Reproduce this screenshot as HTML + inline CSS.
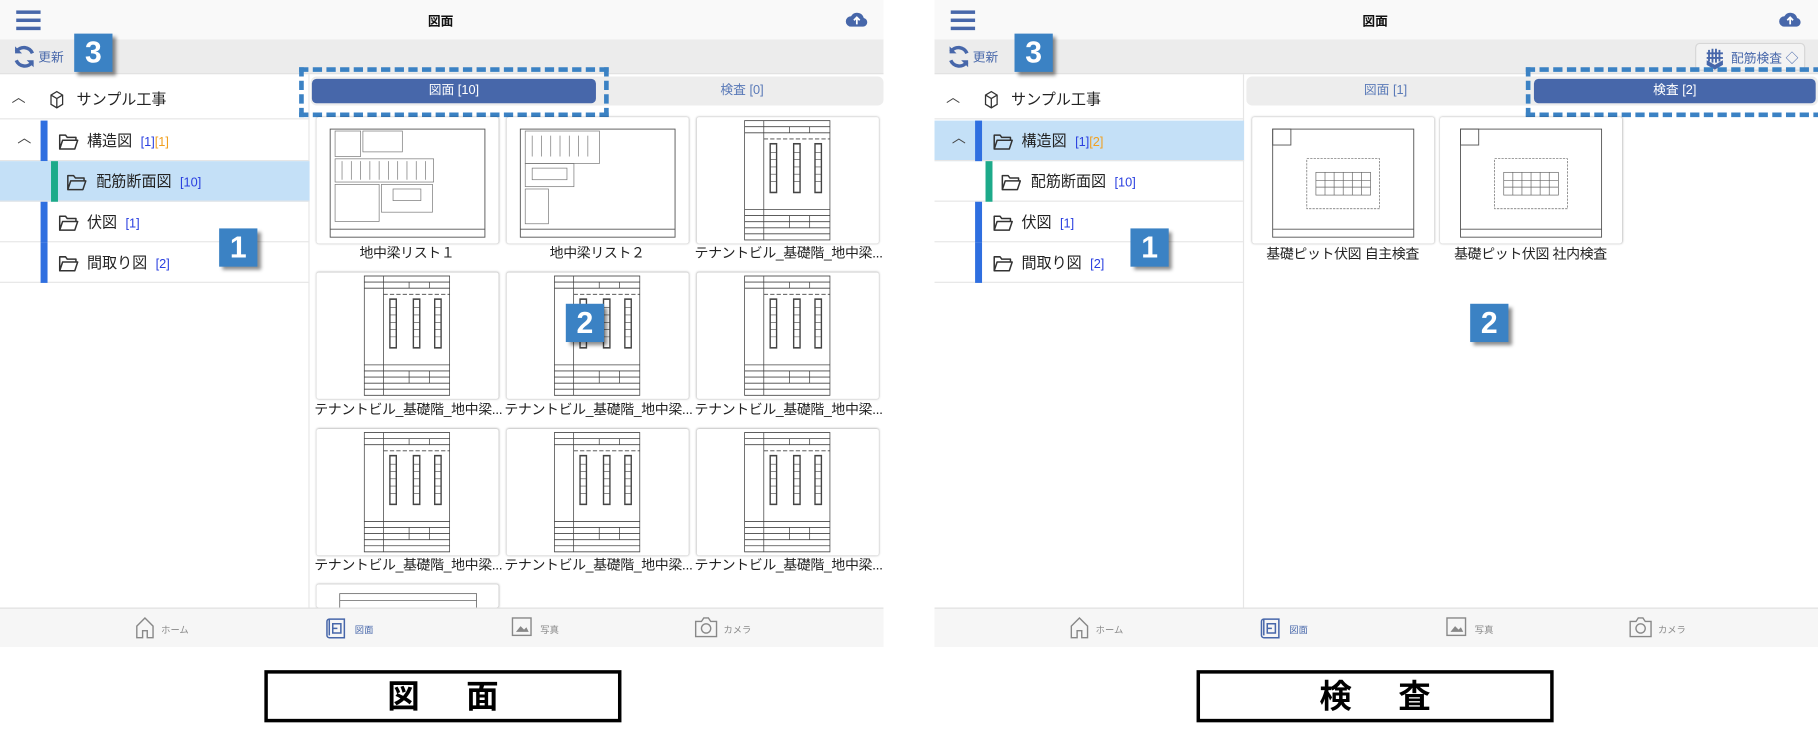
<!DOCTYPE html>
<html><head><meta charset="utf-8">
<style>
*{margin:0;padding:0;box-sizing:border-box}
body{width:1818px;height:734px;overflow:hidden;background:#fff;font-family:"Liberation Sans","Noto Sans CJK JP",sans-serif}
#root{position:absolute;left:0;top:0;width:1568px;height:633px;transform:scale(1.15944);transform-origin:0 0}
.a{position:absolute}
.hdr{background:#f9f9f9;height:34px}
.tb{background:#ececec;height:30px;top:34px;border-bottom:1px solid #e2e2e2}
.title{font-size:11px;font-weight:bold;color:#111;top:10px}
.badge{background:#3b82c4;color:#fff;font-weight:bold;font-size:26px;width:33px;height:33px;text-align:center;line-height:33px;box-shadow:3px 3px 3px rgba(0,0,0,.45);font-family:"Liberation Sans",sans-serif}
.row{height:35px;border-bottom:1px solid #e6e6e6;font-size:13px;color:#222;line-height:35px}
.bar{width:6px;height:35px;top:0}
.blue{color:#2a3fe0}.orng{color:#f0a020}
.card{width:157px;height:109px;background:#fff;box-shadow:0 0 2px rgba(0,0,0,.35);border-radius:2px}
.lbl{font-size:12px;color:#222;width:160px;text-align:center;white-space:nowrap;letter-spacing:-0.3px}
.nav{background:#f6f6f6;height:34px;top:524px;border-top:1px solid #e0e0e0}
.ni{font-size:8px;color:#888;top:13px}
.dash{border:4px dashed #3b82c4}
.tab{height:21px;top:68px;font-size:11px;text-align:center;line-height:21px;border-radius:4px}
.tabA{background:#4767aa;color:#fff}
.tabI{color:#5a7ab8}
.big{border:3px solid #000;height:45px;top:578px;width:308px;font-size:28px;font-weight:bold;text-align:center;line-height:39px;letter-spacing:40px;text-indent:40px;font-family:"Liberation Sans","Noto Sans CJK JP",sans-serif}
.fold{position:absolute;top:10px}
</style></head><body>
<svg width="0" height="0" style="position:absolute">
<defs>
<symbol id="fd" viewBox="0 0 18 16"><path d="M1.5 14.5V2.5h5l1.5 2h7.5v2.5M1.5 14.5L4 7h13l-2.5 7.5z" fill="none" stroke="#333" stroke-width="1.3" stroke-linejoin="round"/></symbol>
<symbol id="beam" viewBox="0 0 100 100">
<g fill="none" stroke="#444" stroke-width="0.7">
<rect x="10" y="1" width="80" height="98"/>
<line x1="10" y1="6" x2="90" y2="6"/><line x1="10" y1="11" x2="90" y2="11"/>
<line x1="28" y1="1" x2="28" y2="99"/>
<line x1="52" y1="6" x2="52" y2="11"/><line x1="71" y1="6" x2="71" y2="11"/>
<line x1="28" y1="16" x2="90" y2="16" stroke-dasharray="4 2"/>
<rect x="34" y="20" width="6" height="40" stroke-width="1.3"/><rect x="56" y="20" width="6" height="40" stroke-width="1.3"/><rect x="76" y="20" width="6" height="40" stroke-width="1.3"/>
<line x1="10" y1="74" x2="90" y2="74"/><line x1="10" y1="79" x2="90" y2="79"/><line x1="10" y1="84" x2="90" y2="84"/><line x1="10" y1="89" x2="90" y2="89"/><line x1="10" y1="94" x2="90" y2="94"/>
<line x1="52" y1="79" x2="52" y2="89"/><line x1="71" y1="79" x2="71" y2="89"/>
</g>
<g stroke="#444" stroke-width="0.5"><line x1="34" y1="27" x2="40" y2="27"/><line x1="34" y1="33" x2="40" y2="33"/><line x1="34" y1="39" x2="40" y2="39"/><line x1="34" y1="45" x2="40" y2="45"/><line x1="34" y1="51" x2="40" y2="51"/><line x1="56" y1="27" x2="62" y2="27"/><line x1="56" y1="33" x2="62" y2="33"/><line x1="56" y1="39" x2="62" y2="39"/><line x1="56" y1="45" x2="62" y2="45"/><line x1="56" y1="51" x2="62" y2="51"/><line x1="76" y1="27" x2="82" y2="27"/><line x1="76" y1="33" x2="82" y2="33"/><line x1="76" y1="39" x2="82" y2="39"/><line x1="76" y1="45" x2="82" y2="45"/><line x1="76" y1="51" x2="82" y2="51"/></g>
</symbol>
<symbol id="sheet" viewBox="0 0 160 110">
<g fill="none" stroke="#555" stroke-width="0.8">
<rect x="12" y="10" width="136" height="95"/><line x1="12" y1="98" x2="148" y2="98"/>
</g>
</symbol>
<symbol id="plan" viewBox="0 0 160 110">
<g fill="none" stroke="#555" stroke-width="0.8"><rect x="18" y="10" width="124" height="95"/><line x1="18" y1="98" x2="142" y2="98"/><rect x="18" y="10" width="16" height="14"/></g>
<g fill="none" stroke="#666" stroke-width="0.6"><rect x="48" y="36" width="64" height="44" stroke-dasharray="2 1"/><rect x="56" y="48" width="48" height="20"/><line x1="64" y1="48" x2="64" y2="68"/><line x1="72" y1="48" x2="72" y2="68"/><line x1="80" y1="48" x2="80" y2="68"/><line x1="88" y1="48" x2="88" y2="68"/><line x1="96" y1="48" x2="96" y2="68"/><line x1="56" y1="55" x2="104" y2="55"/><line x1="56" y1="61" x2="104" y2="61"/></g>
</symbol>
</defs></svg>
<div id="root">

<div class="a hdr" style="left:0;width:762px;top:0"></div>
<div class="a hdr" style="left:806px;width:762px;top:0"></div>
<div class="a tb" style="left:0;width:762px"></div>
<div class="a tb" style="left:806px;width:762px"></div>

<!-- LEFT PANEL -->
<div class="a" style="left:14px;top:9px;width:21px"><div style="height:3px;background:#4767aa;margin-bottom:4px"></div><div style="height:3px;background:#4767aa;margin-bottom:4px"></div><div style="height:3px;background:#4767aa"></div></div>
<div class="a title" style="left:369px">図面</div>
<svg class="a" style="left:729px;top:8px" width="20" height="16" viewBox="0 0 20 16"><path d="M5 15a4.5 4.5 0 0 1 0-9 6 6 0 0 1 11 1.5 3.8 3.8 0 0 1-.5 7.5z" fill="#4767aa"/><path d="M10 13V7M7.5 9.5L10 7l2.5 2.5" stroke="#fff" stroke-width="1.5" fill="none"/></svg>
<svg class="a" style="left:10px;top:38px" width="22" height="22" viewBox="0 0 22 22"><path d="M18 8A8 8 0 0 0 4 6.5M4 14a8 8 0 0 0 14 1.5" stroke="#4767aa" stroke-width="3" fill="none"/><path d="M3 2v6h6z" fill="#4767aa"/><path d="M19 20v-6h-6z" fill="#4767aa"/></svg>
<div class="a" style="left:33px;top:41px;font-size:11px;color:#4767aa">更新</div>
<div class="a badge" style="left:64px;top:29px">3</div>

<div class="a" style="left:0;top:64px;width:267px;height:460px;border-right:1px solid #e6e6e6"></div>
<div class="a row" style="left:0;top:68px;width:267px">
  <span class="a" style="left:10px;top:-1px;font-size:12px;color:#444">︿</span>
  <svg class="a" style="left:42px;top:10px" width="14" height="16" viewBox="0 0 14 16"><path d="M2 4l5-3 5 3v8l-5 3-5-3z M2 4l5 3 5-3 M7 7v8" stroke="#333" fill="none" stroke-width="1.1"/></svg>
  <span class="a" style="left:66px">サンプル工事</span></div>
<div class="a row" style="left:0;top:104px;width:267px"><div class="a bar" style="left:35px;background:#2f6fe0"></div><span class="a" style="left:15px;top:-2px;font-size:12px;color:#444">︿</span><svg class="fold" style="left:50px" width="18" height="16"><use href="#fd"/></svg><span class="a" style="left:75px">構造図 &nbsp;<span class="blue" style="font-size:11px">[1]</span><span class="orng" style="font-size:11px">[1]</span></span></div>
<div class="a row" style="left:0;top:139px;width:267px;background:#c4e0f7"><div class="a bar" style="left:44px;background:#1daa8a"></div><svg class="fold" style="left:57px" width="18" height="16"><use href="#fd"/></svg><span class="a" style="left:83px">配筋断面図 &nbsp;<span class="blue" style="font-size:11px">[10]</span></span></div>
<div class="a row" style="left:0;top:174px;width:267px"><div class="a bar" style="left:35px;background:#2f6fe0"></div><svg class="fold" style="left:50px" width="18" height="16"><use href="#fd"/></svg><span class="a" style="left:75px">伏図 &nbsp;<span class="blue" style="font-size:11px">[1]</span></span></div>
<div class="a row" style="left:0;top:209px;width:267px"><div class="a bar" style="left:35px;background:#2f6fe0"></div><svg class="fold" style="left:50px" width="18" height="16"><use href="#fd"/></svg><span class="a" style="left:75px">間取り図 &nbsp;<span class="blue" style="font-size:11px">[2]</span></span></div>

<div class="a" style="left:268px;top:66px;width:494px;height:25px;background:#ededed;border-radius:5px"></div>
<div class="a tab tabA" style="left:269px;width:245px">図面 [10]</div>
<div class="a tab tabI" style="left:520px;width:240px">検査 [0]</div>
<div class="a dash" style="left:258px;top:58px;width:267px;height:43px"></div>

<div class="a card" style="left:273px;top:101px"><svg width="157" height="109"><use href="#sheet"/><g stroke="#777" stroke-width=".6" fill="none"><rect x="16" y="12" width="22" height="22"/><rect x="40" y="12" width="34" height="18"/><rect x="16" y="36" width="85" height="20"/><line x1="22" y1="38" x2="22" y2="54"/><line x1="30" y1="38" x2="30" y2="54"/><line x1="38" y1="38" x2="38" y2="54"/><line x1="46" y1="38" x2="46" y2="54"/><line x1="54" y1="38" x2="54" y2="54"/><line x1="62" y1="38" x2="62" y2="54"/><line x1="70" y1="38" x2="70" y2="54"/><line x1="78" y1="38" x2="78" y2="54"/><line x1="86" y1="38" x2="86" y2="54"/><line x1="94" y1="38" x2="94" y2="54"/><rect x="16" y="58" width="38" height="32"/><rect x="56" y="58" width="44" height="24"/><rect x="66" y="62" width="24" height="10"/></g></svg></div>
<div class="a card" style="left:437px;top:101px"><svg width="157" height="109"><use href="#sheet"/><g stroke="#777" stroke-width=".6" fill="none"><rect x="16" y="12" width="64" height="28"/><line x1="22" y1="16" x2="22" y2="34"/><line x1="30" y1="16" x2="30" y2="34"/><line x1="38" y1="16" x2="38" y2="34"/><line x1="46" y1="16" x2="46" y2="34"/><line x1="54" y1="16" x2="54" y2="34"/><line x1="62" y1="16" x2="62" y2="34"/><line x1="70" y1="16" x2="70" y2="34"/><rect x="16" y="40" width="42" height="20"/><rect x="22" y="44" width="30" height="10"/><rect x="16" y="62" width="20" height="30"/></g></svg></div>
<div class="a card" style="left:601px;top:101px"><svg width="157" height="109"><svg x="32" y="2" width="92" height="105" viewBox="0 0 100 100" preserveAspectRatio="none"><use href="#beam"/></svg></svg></div>
<div class="a lbl" style="left:271px;top:209px">地中梁リスト１</div>
<div class="a lbl" style="left:435px;top:209px">地中梁リスト２</div>
<div class="a lbl" style="left:599px;top:209px">テナントビル_基礎階_地中梁...</div>

<div class="a card" style="left:273px;top:235px"><svg width="157" height="109"><svg x="32" y="2" width="92" height="105" viewBox="0 0 100 100" preserveAspectRatio="none"><use href="#beam"/></svg></svg></div>
<div class="a card" style="left:437px;top:235px"><svg width="157" height="109"><svg x="32" y="2" width="92" height="105" viewBox="0 0 100 100" preserveAspectRatio="none"><use href="#beam"/></svg></svg></div>
<div class="a card" style="left:601px;top:235px"><svg width="157" height="109"><svg x="32" y="2" width="92" height="105" viewBox="0 0 100 100" preserveAspectRatio="none"><use href="#beam"/></svg></svg></div>
<div class="a lbl" style="left:271px;top:344px">テナントビル_基礎階_地中梁...</div>
<div class="a lbl" style="left:435px;top:344px">テナントビル_基礎階_地中梁...</div>
<div class="a lbl" style="left:599px;top:344px">テナントビル_基礎階_地中梁...</div>

<div class="a card" style="left:273px;top:370px"><svg width="157" height="109"><svg x="32" y="2" width="92" height="105" viewBox="0 0 100 100" preserveAspectRatio="none"><use href="#beam"/></svg></svg></div>
<div class="a card" style="left:437px;top:370px"><svg width="157" height="109"><svg x="32" y="2" width="92" height="105" viewBox="0 0 100 100" preserveAspectRatio="none"><use href="#beam"/></svg></svg></div>
<div class="a card" style="left:601px;top:370px"><svg width="157" height="109"><svg x="32" y="2" width="92" height="105" viewBox="0 0 100 100" preserveAspectRatio="none"><use href="#beam"/></svg></svg></div>
<div class="a lbl" style="left:271px;top:478px">テナントビル_基礎階_地中梁...</div>
<div class="a lbl" style="left:435px;top:478px">テナントビル_基礎階_地中梁...</div>
<div class="a lbl" style="left:599px;top:478px">テナントビル_基礎階_地中梁...</div>
<div class="a card" style="left:273px;top:504px;height:20px"><svg width="157" height="20"><rect x="20" y="8" width="118" height="14" fill="none" stroke="#666" stroke-width=".7"/><line x1="20" y1="14" x2="138" y2="14" stroke="#666" stroke-width=".6"/></svg></div>

<div class="a badge" style="left:189px;top:197px">1</div>
<div class="a badge" style="left:488px;top:262px">2</div>

<div class="a nav" style="left:0;width:762px"></div>
<svg class="a" style="left:116px;top:531px" width="18" height="20" viewBox="0 0 18 20"><path d="M2 9L9 2l7 7v10h-5v-6H7v6H2z" fill="none" stroke="#888" stroke-width="1.2"/></svg>
<div class="a ni" style="left:139px;top:538px">ホーム</div>
<svg class="a" style="left:281px;top:532px" width="18" height="19" viewBox="0 0 18 19"><path d="M3 2h13v16H3a2 2 0 0 1-2-2V4a2 2 0 0 1 2-2zM3 2v14M6 6h7v8H6zM6 10h4" fill="none" stroke="#4767aa" stroke-width="1.3"/></svg>
<div class="a ni" style="left:306px;top:538px;color:#4767aa">図面</div>
<svg class="a" style="left:441px;top:532px" width="18" height="17" viewBox="0 0 18 17"><rect x="1" y="1" width="16" height="15" fill="none" stroke="#888" stroke-width="1.2"/><path d="M4 13l4-5 3 3 2-2 2 4z" fill="#888"/></svg>
<div class="a ni" style="left:466px;top:538px">写真</div>
<svg class="a" style="left:599px;top:532px" width="20" height="18" viewBox="0 0 20 18"><path d="M1 4h5l2-3h4l2 3h5v13H1z" fill="none" stroke="#888" stroke-width="1.2"/><circle cx="10" cy="10" r="4" fill="none" stroke="#888" stroke-width="1.2"/></svg>
<div class="a ni" style="left:624px;top:538px">カメラ</div>

<!-- RIGHT PANEL -->
<div class="a" style="left:820px;top:9px;width:21px"><div style="height:3px;background:#4767aa;margin-bottom:4px"></div><div style="height:3px;background:#4767aa;margin-bottom:4px"></div><div style="height:3px;background:#4767aa"></div></div>
<div class="a title" style="left:1175px">図面</div>
<svg class="a" style="left:1534px;top:8px" width="20" height="16" viewBox="0 0 20 16"><path d="M5 15a4.5 4.5 0 0 1 0-9 6 6 0 0 1 11 1.5 3.8 3.8 0 0 1-.5 7.5z" fill="#4767aa"/><path d="M10 13V7M7.5 9.5L10 7l2.5 2.5" stroke="#fff" stroke-width="1.5" fill="none"/></svg>
<svg class="a" style="left:816px;top:38px" width="22" height="22" viewBox="0 0 22 22"><path d="M18 8A8 8 0 0 0 4 6.5M4 14a8 8 0 0 0 14 1.5" stroke="#4767aa" stroke-width="3" fill="none"/><path d="M3 2v6h6z" fill="#4767aa"/><path d="M19 20v-6h-6z" fill="#4767aa"/></svg>
<div class="a" style="left:839px;top:41px;font-size:11px;color:#4767aa">更新</div>
<div class="a badge" style="left:875px;top:29px">3</div>
<div class="a" style="left:1462px;top:37px;width:95px;height:24px;border:1px solid #d6d6d6;border-radius:4px;background:#f3f3f3"></div>
<svg class="a" style="left:1470px;top:40px" width="18" height="20" viewBox="0 0 18 20"><path d="M2 12l7 4 7-4v4l-7 4-7-4z" fill="#4767aa"/><g stroke="#4767aa" stroke-width="1.6"><line x1="4" y1="3" x2="4" y2="13"/><line x1="7" y1="2" x2="7" y2="14"/><line x1="10" y1="2" x2="10" y2="14"/><line x1="13" y1="3" x2="13" y2="13"/><line x1="2" y1="6" x2="16" y2="6"/><line x1="2" y1="10" x2="16" y2="10"/></g></svg>
<div class="a" style="left:1493px;top:42px;font-size:11px;color:#4767aa">配筋検査 ◇</div>

<div class="a" style="left:806px;top:64px;width:267px;height:460px;border-right:1px solid #e6e6e6"></div>
<div class="a row" style="left:806px;top:68px;width:267px">
  <span class="a" style="left:10px;top:-1px;font-size:12px;color:#444">︿</span>
  <svg class="a" style="left:42px;top:10px" width="14" height="16" viewBox="0 0 14 16"><path d="M2 4l5-3 5 3v8l-5 3-5-3z M2 4l5 3 5-3 M7 7v8" stroke="#333" fill="none" stroke-width="1.1"/></svg>
  <span class="a" style="left:66px">サンプル工事</span></div>
<div class="a row" style="left:806px;top:104px;width:267px;background:#c4e0f7"><div class="a bar" style="left:35px;background:#2f6fe0"></div><span class="a" style="left:15px;top:-2px;font-size:12px;color:#444">︿</span><svg class="fold" style="left:50px" width="18" height="16"><use href="#fd"/></svg><span class="a" style="left:75px">構造図 &nbsp;<span class="blue" style="font-size:11px">[1]</span><span class="orng" style="font-size:11px">[2]</span></span></div>
<div class="a row" style="left:806px;top:139px;width:267px"><div class="a bar" style="left:44px;background:#1daa8a"></div><svg class="fold" style="left:57px" width="18" height="16"><use href="#fd"/></svg><span class="a" style="left:83px">配筋断面図 &nbsp;<span class="blue" style="font-size:11px">[10]</span></span></div>
<div class="a row" style="left:806px;top:174px;width:267px"><div class="a bar" style="left:35px;background:#2f6fe0"></div><svg class="fold" style="left:50px" width="18" height="16"><use href="#fd"/></svg><span class="a" style="left:75px">伏図 &nbsp;<span class="blue" style="font-size:11px">[1]</span></span></div>
<div class="a row" style="left:806px;top:209px;width:267px"><div class="a bar" style="left:35px;background:#2f6fe0"></div><svg class="fold" style="left:50px" width="18" height="16"><use href="#fd"/></svg><span class="a" style="left:75px">間取り図 &nbsp;<span class="blue" style="font-size:11px">[2]</span></span></div>

<div class="a" style="left:1075px;top:66px;width:493px;height:25px;background:#ededed;border-radius:5px"></div>
<div class="a tab tabI" style="left:1075px;width:240px">図面 [1]</div>
<div class="a tab tabA" style="left:1323px;width:243px">検査 [2]</div>
<div class="a dash" style="left:1316px;top:58px;width:256px;height:43px"></div>

<div class="a card" style="left:1080px;top:101px"><svg width="157" height="109"><use href="#plan"/></svg></div>
<div class="a card" style="left:1242px;top:101px"><svg width="157" height="109"><use href="#plan"/></svg></div>
<div class="a lbl" style="left:1078px;top:210px">基礎ピット伏図 自主検査</div>
<div class="a lbl" style="left:1240px;top:210px">基礎ピット伏図 社内検査</div>

<div class="a badge" style="left:975px;top:197px">1</div>
<div class="a badge" style="left:1268px;top:262px">2</div>

<div class="a nav" style="left:806px;width:762px"></div>
<svg class="a" style="left:922px;top:531px" width="18" height="20" viewBox="0 0 18 20"><path d="M2 9L9 2l7 7v10h-5v-6H7v6H2z" fill="none" stroke="#888" stroke-width="1.2"/></svg>
<div class="a ni" style="left:945px;top:538px">ホーム</div>
<svg class="a" style="left:1087px;top:532px" width="18" height="19" viewBox="0 0 18 19"><path d="M3 2h13v16H3a2 2 0 0 1-2-2V4a2 2 0 0 1 2-2zM3 2v14M6 6h7v8H6zM6 10h4" fill="none" stroke="#4767aa" stroke-width="1.3"/></svg>
<div class="a ni" style="left:1112px;top:538px;color:#4767aa">図面</div>
<svg class="a" style="left:1247px;top:532px" width="18" height="17" viewBox="0 0 18 17"><rect x="1" y="1" width="16" height="15" fill="none" stroke="#888" stroke-width="1.2"/><path d="M4 13l4-5 3 3 2-2 2 4z" fill="#888"/></svg>
<div class="a ni" style="left:1272px;top:538px">写真</div>
<svg class="a" style="left:1405px;top:532px" width="20" height="18" viewBox="0 0 20 18"><path d="M1 4h5l2-3h4l2 3h5v13H1z" fill="none" stroke="#888" stroke-width="1.2"/><circle cx="10" cy="10" r="4" fill="none" stroke="#888" stroke-width="1.2"/></svg>
<div class="a ni" style="left:1430px;top:538px">カメラ</div>

<div class="a big" style="left:228px">図面</div>
<div class="a big" style="left:1032px">検査</div>
</div>
</body></html>
